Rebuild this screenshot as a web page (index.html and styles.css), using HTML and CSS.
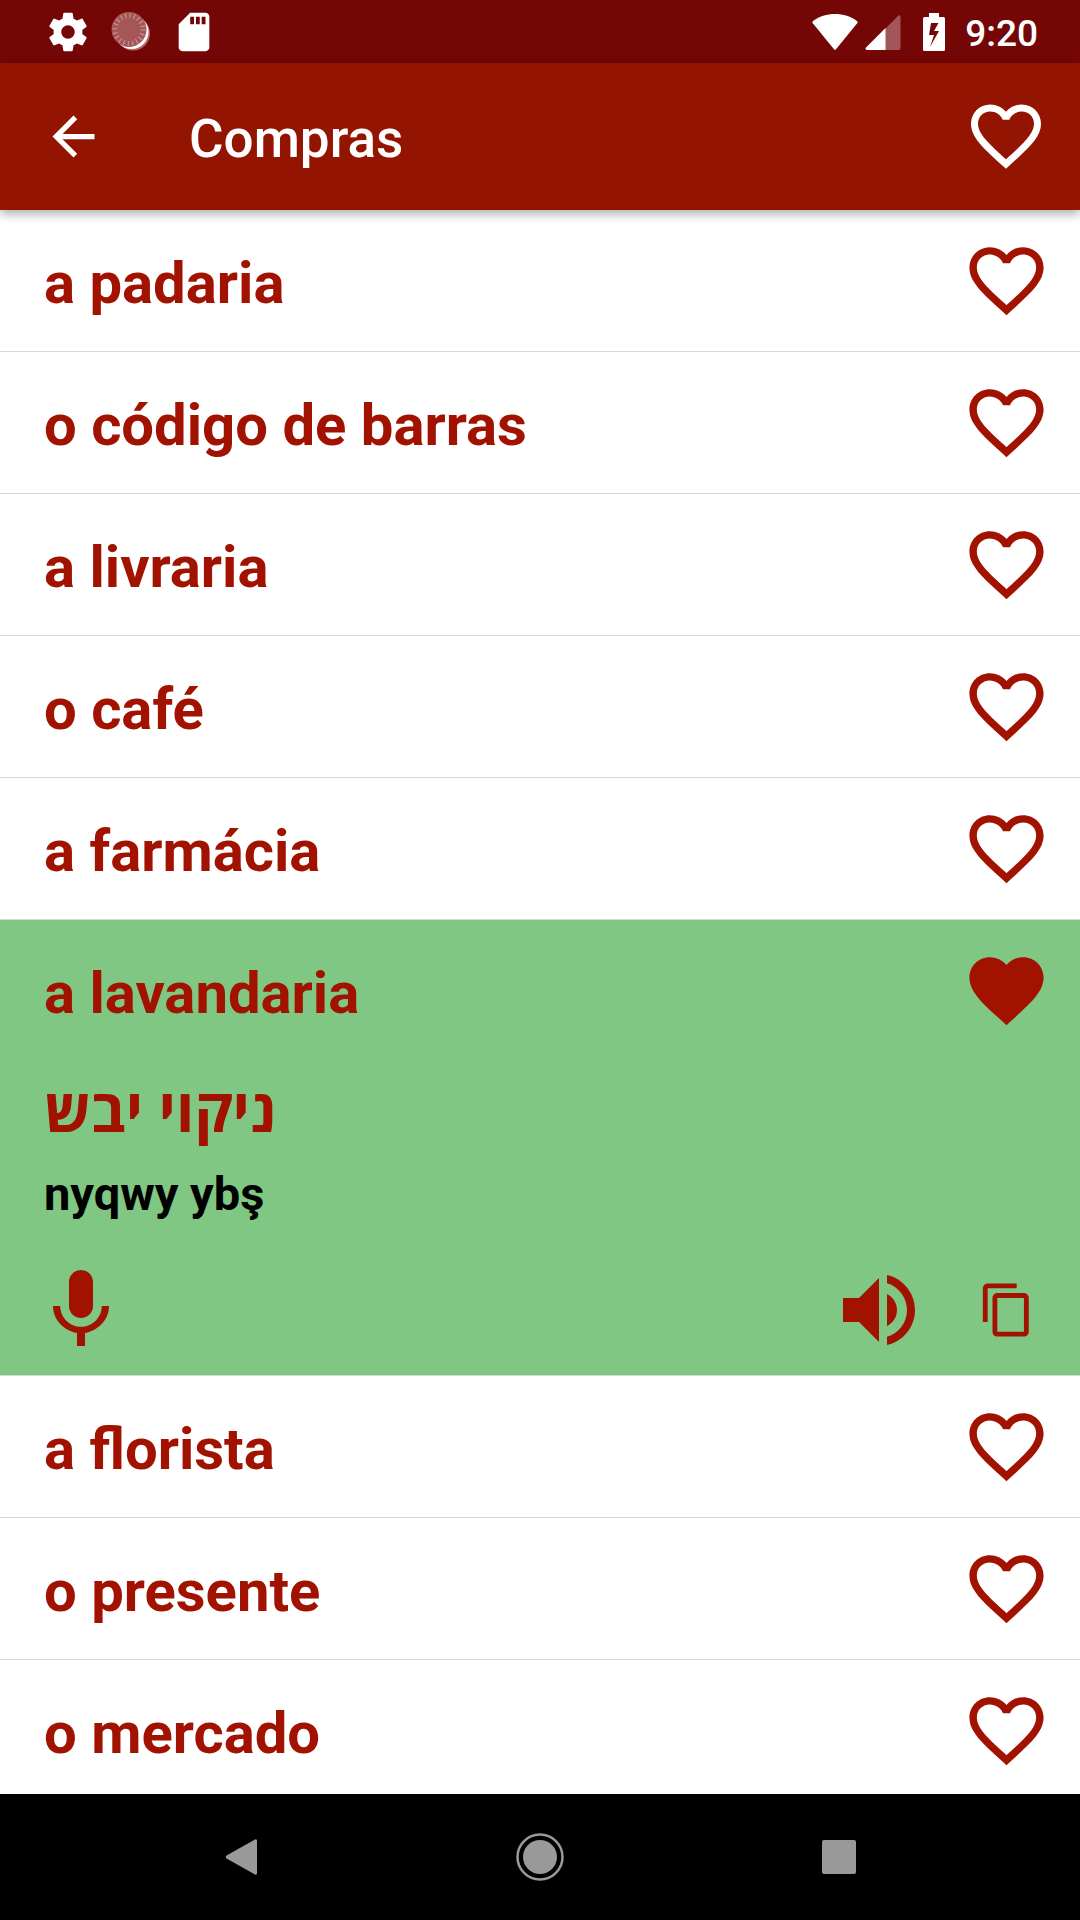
FILE: index.html
```html
<!DOCTYPE html>
<html lang="pt">
<head>
    <meta charset="UTF-8">
    <meta name="viewport" content="width=device-width, initial-scale=1.0">
    <title>Compras</title>
    <link rel="stylesheet" href="styles.css">
</head>
<body>
    <!-- Shared icons -->
    <svg class="sprite" aria-hidden="true">
        <symbol id="heart" viewBox="0 0 24 24">
            <path d="M16.5 3c-1.74 0-3.41.81-4.5 2.09C10.91 3.81 9.24 3 7.5 3 4.42 3 2 5.42 2 8.5c0 3.78 3.4 6.86 8.55 11.54L12 21.35l1.45-1.32C18.6 15.36 22 12.28 22 8.5 22 5.42 19.58 3 16.5 3zm-4.4 15.55l-.1.1-.1-.1C7.14 14.24 4 11.39 4 8.5 4 6.5 5.5 5 7.5 5c1.54 0 3.04.99 3.57 2.36h1.87C13.46 5.99 14.96 5 16.5 5c2 0 3.5 1.5 3.5 3.5 0 2.89-3.14 5.74-7.9 10.05z"/>
        </symbol>
        <symbol id="heart-full" viewBox="0 0 24 24">
            <path d="M12 21.35l-1.45-1.32C5.4 15.36 2 12.28 2 8.5 2 5.42 4.42 3 7.5 3c1.74 0 3.41.81 4.5 2.09C13.09 3.81 14.76 3 16.5 3 19.58 3 22 5.42 22 8.5c0 3.78-3.4 6.86-8.55 11.54L12 21.35z"/>
        </symbol>
    </svg>

    <div class="app">
        <div class="status-bar">
            <div class="status-left">
                <svg class="status-icon" viewBox="0 0 24 24"><path d="M19.43 12.98c.04-.32.07-.64.07-.98s-.03-.66-.07-.98l2.11-1.65c.19-.15.24-.42.12-.64l-2-3.46c-.12-.22-.39-.3-.61-.22l-2.49 1c-.52-.4-1.08-.73-1.69-.98l-.38-2.65C14.46 2.18 14.25 2 14 2h-4c-.25 0-.46.18-.49.42l-.38 2.65c-.61.25-1.17.59-1.69.98l-2.49-1c-.23-.09-.49 0-.61.22l-2 3.46c-.13.22-.07.49.12.64l2.11 1.65c-.04.32-.07.65-.07.98s.03.66.07.98l-2.11 1.65c-.19.15-.24.42-.12.64l2 3.46c.12.22.39.3.61.22l2.49-1c.52.4 1.08.73 1.69.98l.38 2.65c.03.24.24.42.49.42h4c.25 0 .46-.18.49-.42l.38-2.65c.61-.25 1.17-.59 1.69-.98l2.49 1c.23.09.49 0 .61-.22l2-3.46c.12-.22.07-.49-.12-.64l-2.11-1.65zM12 15.5c-1.93 0-3.5-1.57-3.5-3.5s1.57-3.5 3.5-3.5 3.5 1.57 3.5 3.5-1.57 3.5-3.5 3.5z"/></svg>
                <svg class="status-icon" viewBox="0 0 46 46">
                    <circle cx="25" cy="24.5" r="17" fill="#b06a6c"/>
                    <circle cx="23.5" cy="23" r="17"/>
                    <circle cx="21" cy="20.5" r="17.5" fill="#a55758"/>
                    <circle cx="21" cy="20.5" r="14" fill="none" stroke="#c99596" stroke-width="5" stroke-dasharray="1.1 3.3"/>
                </svg>
                <svg class="status-icon" viewBox="0 0 24 24"><path d="M18 2h-8L4.02 8 4 20c0 1.1.9 2 2 2h12c1.1 0 2-.9 2-2V4c0-1.1-.9-2-2-2zm-6 6h-2V4h2v4zm3 0h-2V4h2v4zm3 0h-2V4h2v4z"/></svg>
            </div>
            <div class="status-right">
                <svg class="icon-wifi" viewBox="0 0 46 38"><path d="M.8 8.2Q0 9.2.8 10.2L22 36.2Q23 37.4 24 36.2L45.2 10.2Q46 9.2 45.2 8.2C39 3.2 31 1 23 1S7 3.2.8 8.2z"/></svg>
                <svg class="icon-signal" viewBox="0 0 36 38">
                    <path fill="#a35658" d="M20 16L33.5 2.5Q35.5 1.5 35.5 4V35Q35.5 37 33.5 37H20z"/>
                    <path d="M20.5 15V37H2Q-.5 36.5 1 34.5z"/>
                </svg>
                <svg class="icon-battery" viewBox="0 0 22 38"><path fill-rule="evenodd" d="M6 0h10v4h4.5Q22 4 22 5.5v31Q22 38 20.5 38h-19Q0 38 0 36.5v-31Q0 4 1.5 4H6zM8 10L6 22h5L7 34 16 18h-5l4.5-8z"/></svg>
                <span class="clock">9:20</span>
            </div>
        </div>

        <header class="app-bar">
            <button class="icon-btn back" aria-label="Voltar">
                <svg viewBox="0 0 24 24"><path d="M20 11H7.83l5.59-5.59L12 4l-8 8 8 8 1.41-1.41L7.83 13H20v-2z"/></svg>
            </button>
            <h1>Compras</h1>
            <button class="icon-btn fav-all" aria-label="Favoritos"><svg><use href="#heart"/></svg></button>
        </header>

        <ul class="words">
            <li class="word">
                <div class="word-row">
                    <button class="term">a padaria</button>
                    <button class="icon-btn fav" aria-label="Favorito"><svg><use href="#heart"/></svg></button>
                </div>
            </li>
            <li class="word">
                <div class="word-row">
                    <button class="term">o código de barras</button>
                    <button class="icon-btn fav" aria-label="Favorito"><svg><use href="#heart"/></svg></button>
                </div>
            </li>
            <li class="word">
                <div class="word-row">
                    <button class="term">a livraria</button>
                    <button class="icon-btn fav" aria-label="Favorito"><svg><use href="#heart"/></svg></button>
                </div>
            </li>
            <li class="word">
                <div class="word-row">
                    <button class="term">o café</button>
                    <button class="icon-btn fav" aria-label="Favorito"><svg><use href="#heart"/></svg></button>
                </div>
            </li>
            <li class="word">
                <div class="word-row">
                    <button class="term">a farmácia</button>
                    <button class="icon-btn fav" aria-label="Favorito"><svg><use href="#heart"/></svg></button>
                </div>
            </li>
            <li class="word open">
                <div class="word-row">
                    <button class="term">a lavandaria</button>
                    <button class="icon-btn fav" aria-label="Favorito"><svg><use href="#heart-full"/></svg></button>
                </div>
                <p class="translation" lang="he">ניקוי יבש</p>
                <p class="phonetic">nyqwy ybş</p>
                <div class="actions">
                    <button class="icon-btn mic" aria-label="Gravar">
                        <svg viewBox="0 0 24 24"><path d="M12 14c1.66 0 3-1.34 3-3V5c0-1.66-1.34-3-3-3S9 3.34 9 5v6c0 1.66 1.34 3 3 3zm5.2-3c0 3-2.54 5.2-5.2 5.2S6.8 14 6.8 11H5c0 3.41 2.72 6.23 6 6.72V21h2v-3.28c3.28-.49 6-3.31 6-6.72h-1.8z"/></svg>
                    </button>
                    <button class="icon-btn speak" aria-label="Ouvir">
                        <svg viewBox="0 0 24 24"><path d="M3 9v6h4l5 5V4L7 9H3zm13.5 3c0-1.77-1.02-3.29-2.5-4.03v8.05c1.48-.73 2.5-2.25 2.5-4.02zM14 3.23v2.06c2.89.86 5 3.54 5 6.71s-2.11 5.85-5 6.71v2.06c4.01-.91 7-4.49 7-8.77s-2.99-7.86-7-8.77z"/></svg>
                    </button>
                    <button class="icon-btn copy" aria-label="Copiar">
                        <svg viewBox="0 0 24 24"><path d="M16 1H4c-1.1 0-2 .9-2 2v14h2V3h12V1zm3 4H8c-1.1 0-2 .9-2 2v14c0 1.1.9 2 2 2h11c1.1 0 2-.9 2-2V7c0-1.1-.9-2-2-2zm0 16H8V7h11v14z"/></svg>
                    </button>
                </div>
            </li>
            <li class="word">
                <div class="word-row">
                    <button class="term">a florista</button>
                    <button class="icon-btn fav" aria-label="Favorito"><svg><use href="#heart"/></svg></button>
                </div>
            </li>
            <li class="word">
                <div class="word-row">
                    <button class="term">o presente</button>
                    <button class="icon-btn fav" aria-label="Favorito"><svg><use href="#heart"/></svg></button>
                </div>
            </li>
            <li class="word">
                <div class="word-row">
                    <button class="term">o mercado</button>
                    <button class="icon-btn fav" aria-label="Favorito"><svg><use href="#heart"/></svg></button>
                </div>
            </li>
        </ul>

        <nav class="nav-bar">
            <button class="icon-btn" aria-label="Anterior">
                <svg viewBox="0 0 48 48"><path d="M38 6.5Q40 5.5 40 8V40Q40 42.5 38 41.5L9.5 25.5Q8 24 9.5 22.5z"/></svg>
            </button>
            <button class="icon-btn" aria-label="Início">
                <svg viewBox="0 0 48 48"><circle cx="24" cy="24" r="17"/><circle cx="24" cy="24" r="22.5" fill="none" stroke="currentColor" stroke-width="2.5"/></svg>
            </button>
            <button class="icon-btn" aria-label="Recentes">
                <svg viewBox="0 0 48 48"><rect x="7" y="7" width="34" height="34" rx="2"/></svg>
            </button>
        </nav>
    </div>
</body>
</html>
```

FILE: styles.css
```css
* {
    box-sizing: border-box;
}

body {
    font-family: Roboto, sans-serif;
    margin: 0;
    background-color: #fff;
}

h1, p, ul {
    margin: 0;
    padding: 0;
}

button {
    background: none;
    border: none;
    padding: 0;
    color: inherit;
    font: inherit;
    cursor: pointer;
}

svg {
    display: block;
    fill: currentColor;
}

.sprite {
    display: none;
}

.app {
    display: flex;
    flex-direction: column;
    height: 100vh;
}

/* Status bar */
.status-bar {
    display: flex;
    flex: none;
    justify-content: space-between;
    align-items: center;
    height: 63px;
    padding: 0 42px 0 45px;
    background-color: #750606;
    color: #fff;
}

.status-left,
.status-right {
    display: flex;
    align-items: center;
}

.status-left {
    gap: 17px;
}

.status-icon {
    width: 46px;
    height: 46px;
}

.icon-wifi {
    width: 46px;
    height: 38px;
    margin-right: 7px;
}

.icon-signal {
    width: 36px;
    height: 38px;
    margin-right: 22px;
}

.icon-battery {
    width: 22px;
    height: 38px;
    margin-right: 20px;
}

.clock {
    font-size: 37px;
    font-weight: 500;
    line-height: 40px;
    padding-top: 4px;
}

/* App bar */
.app-bar {
    position: relative;
    z-index: 1;
    display: flex;
    flex: none;
    align-items: center;
    height: 147px;
    padding: 0 32px 1px 42px;
    background-color: #931400;
    color: #fff;
    box-shadow: 0 4px 10px rgba(0, 0, 0, 0.32);
}

.app-bar h1 {
    flex: 1;
    padding: 5px 0 0 84px;
    font-size: 53px;
    font-weight: 500;
    line-height: 62px;
}

.icon-btn svg {
    width: 100%;
    height: 100%;
}

.back {
    width: 63px;
    height: 63px;
}

.fav-all {
    width: 84px;
    height: 84px;
}

/* Word list */
.words {
    flex: 1;
    min-height: 0;
    overflow-y: auto;
    scrollbar-width: none;
    list-style: none;
    color: #a11200;
}

.word {
    border-bottom: 1px solid #d8d8d8;
}

.word.open {
    background-color: #81c784;
}

.word-row {
    display: flex;
    align-items: center;
    height: 141px;
    padding: 0 29px 0 44px;
}

.term {
    flex: 1;
    padding-top: 4px;
    font-size: 58px;
    font-weight: bold;
    line-height: 68px;
    text-align: left;
}

.fav {
    width: 89px;
    height: 89px;
}

.translation {
    padding: 6px 44px 0;
    font-family: "Open Sans", "Noto Sans", sans-serif;
    font-size: 60px;
    font-weight: bold;
    line-height: 84px;
}

.phonetic {
    padding: 0 44px;
    color: #000;
    font-size: 47px;
    font-weight: bold;
    line-height: 86px;
}

.actions {
    display: flex;
    align-items: center;
    padding: 25px 44px 17px 33px;
}

.mic,
.speak {
    width: 96px;
    height: 96px;
}

.speak {
    margin-left: auto;
    margin-right: 51px;
}

.copy {
    width: 58px;
    height: 58px;
}

/* Navigation bar */
.nav-bar {
    display: flex;
    flex: none;
    justify-content: space-around;
    align-items: center;
    height: 126px;
    padding: 0 92px;
    background-color: #000;
    color: #999;
}

.nav-bar .icon-btn {
    width: 48px;
    height: 48px;
}
```
